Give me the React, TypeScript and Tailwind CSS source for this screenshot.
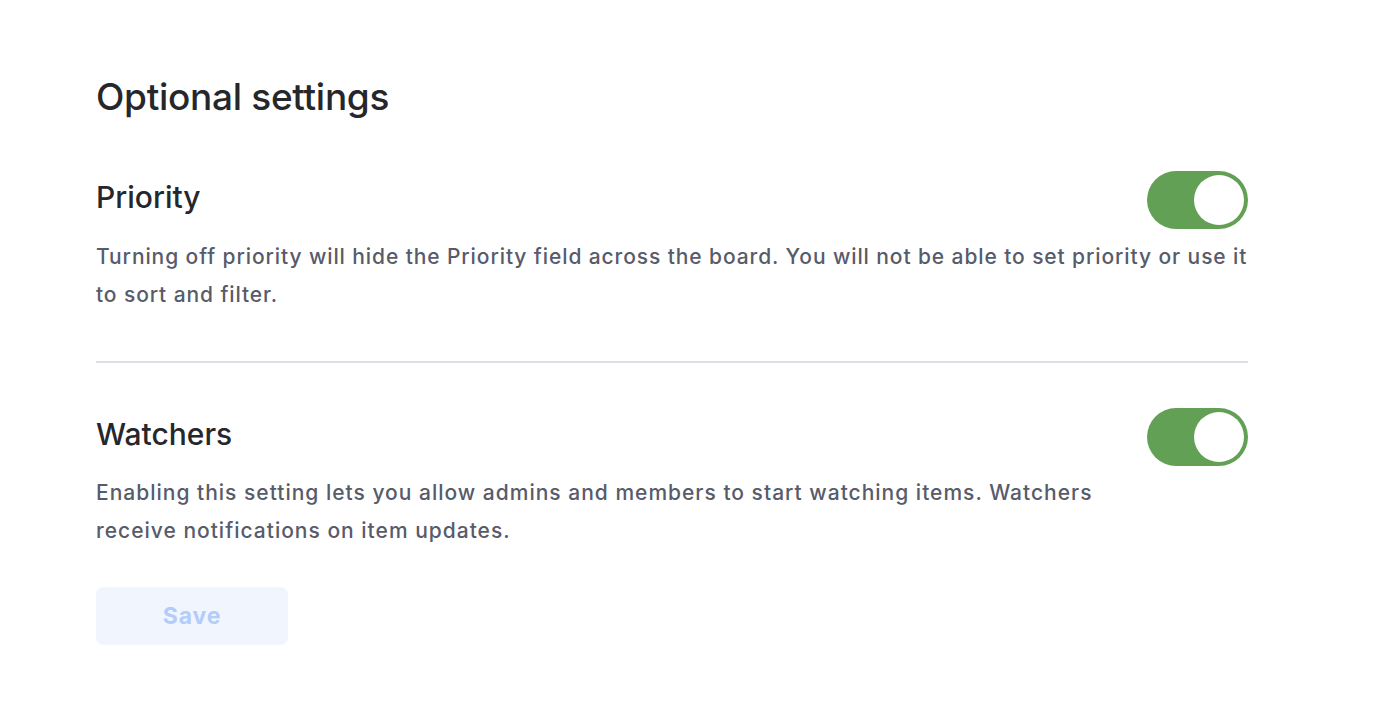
import { useState } from 'react';

function Toggle({ on, onChange }: { on: boolean; onChange: () => void }) {
    return (
        <button
            type="button"
            onClick={onChange}
            className={`flex h-[58px] w-[101px] shrink-0 items-center rounded-full p-[4px] ${on ? 'justify-end bg-[#62a055]' : 'justify-start bg-[#c9ccd4]'}`}
        >
            <span className="block h-[50px] w-[50px] rounded-full bg-white" />
        </button>
    );
}

export default function App() {
    const [priority, setPriority] = useState(true);
    const [watchers, setWatchers] = useState(true);

    return (
        <div className="min-h-[728px] bg-white px-[96px] pt-[74px] font-['Inter',sans-serif]">
            <div className="w-[1152px]">
                <h1 className="text-[37px] font-medium leading-[46px] tracking-[-0.3px] text-[#26272b]">Optional settings</h1>

                <section className="mt-[51px]">
                    <div className="flex items-center justify-between">
                        <h2 className="pb-[6px] text-[30px] font-medium leading-[40px] text-[#26272b]">Priority</h2>
                        <Toggle on={priority} onChange={() => setPriority(!priority)} />
                    </div>
                    <p className="mt-[9px] text-[21px] font-medium leading-[38px] tracking-[0.9px] text-[#575b6a]">
                        Turning off priority will hide the Priority field across the board. You will not be able to set priority or use it to sort and filter.
                    </p>
                </section>

                <div className="mt-[47px] h-[2px] bg-[#dddde6]" />

                <section className="mt-[45px]">
                    <div className="flex items-center justify-between">
                        <h2 className="pb-[6px] text-[30px] font-medium leading-[40px] text-[#26272b]">Watchers</h2>
                        <Toggle on={watchers} onChange={() => setWatchers(!watchers)} />
                    </div>
                    <p className="mt-[8px] max-w-[1010px] text-[21px] font-medium leading-[38px] tracking-[1px] text-[#575b6a]">
                        Enabling this setting lets you allow admins and members to start watching items. Watchers receive notifications on item updates.
                    </p>
                </section>

                <button
                    type="button"
                    disabled
                    className="mt-[37px] h-[58px] w-[192px] rounded-[8px] bg-[#f1f5fe] text-[23px] font-bold tracking-[0.8px] text-[#b3cdfa]"
                >
                    Save
                </button>
            </div>
        </div>
    );
}
